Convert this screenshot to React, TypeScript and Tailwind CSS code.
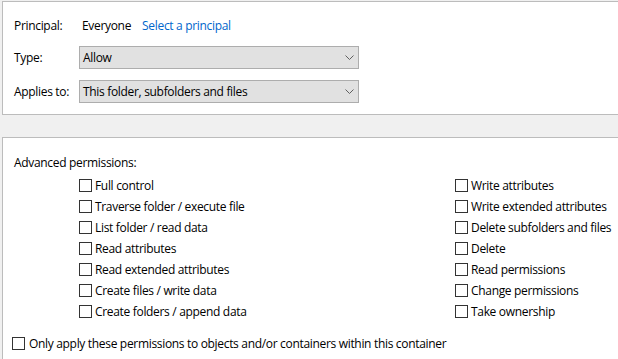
import React from 'react';

const leftPerms = [
  'Full control',
  'Traverse folder / execute file',
  'List folder / read data',
  'Read attributes',
  'Read extended attributes',
  'Create files / write data',
  'Create folders / append data',
];

const rightPerms = [
  'Write attributes',
  'Write extended attributes',
  'Delete subfolders and files',
  'Delete',
  'Read permissions',
  'Change permissions',
  'Take ownership',
];

const Box = () => <span className="w-[13px] h-[13px] border border-[#333333] bg-white flex-shrink-0" />;

const Check = ({ label }: { label: string }) => (
  <label className="flex items-center h-[21px] gap-[3px]">
    <Box />
    <span>{label}</span>
  </label>
);

const Chevron = () => (
  <svg width="9" height="5" viewBox="0 0 9 5" className="mr-[4px]">
    <path d="M0.5 0.5 L4.5 4.5 L8.5 0.5" fill="none" stroke="#606060" strokeWidth="1" />
  </svg>
);

const Select = ({ value }: { value: string }) => (
  <div className="w-[280px] h-[23px] border border-[#adadad] bg-[#e1e1e1] flex items-center justify-between pl-[3px]">
    <span>{value}</span>
    <Chevron />
  </div>
);

export default function App() {
  return (
    <div
      className="w-[618px] h-[359px] bg-[#f0f0f0] overflow-hidden flex flex-col text-[12px] tracking-[-0.32px] text-black pt-[1px] pl-[2px]"
      style={{ fontFamily: '"Open Sans", "Noto Sans", sans-serif' }}
    >
      {/* Principal / type / scope */}
      <div className="h-[114px] w-[620px] border border-r-0 border-[#bcbcbc] bg-white pl-[11px] pt-[14px] flex flex-col">
        <div className="flex items-center h-[20px]">
          <span className="w-[68px]">Principal:</span>
          <span>Everyone</span>
          <span className="ml-[11px] text-[#0066cc]">Select a principal</span>
        </div>
        <div className="flex items-center h-[23px] mt-[10px]">
          <span className="w-[65px]">Type:</span>
          <Select value="Allow" />
        </div>
        <div className="flex items-center h-[23px] mt-[11px]">
          <span className="w-[65px]">Applies to:</span>
          <Select value="This folder, subfolders and files" />
        </div>
      </div>

      {/* Advanced permissions */}
      <div className="mt-[22px] flex-1 w-[620px] border-l border-t border-[#bcbcbc] bg-white pl-[11px] pt-[17px] flex flex-col">
        <div className="h-[16px] flex items-center">Advanced permissions:</div>
        <div className="flex mt-[4px] ml-[65px]">
          <div className="w-[376px] flex flex-col">
            {leftPerms.map(p => <Check key={p} label={p} />)}
          </div>
          <div className="flex flex-col">
            {rightPerms.map(p => <Check key={p} label={p} />)}
          </div>
        </div>
        <div className="mt-[11px] ml-[-2px] flex items-center h-[21px] gap-[4px]">
          <Box />
          <span>Only apply these permissions to objects and/or containers within this container</span>
        </div>
      </div>
    </div>
  );
}
